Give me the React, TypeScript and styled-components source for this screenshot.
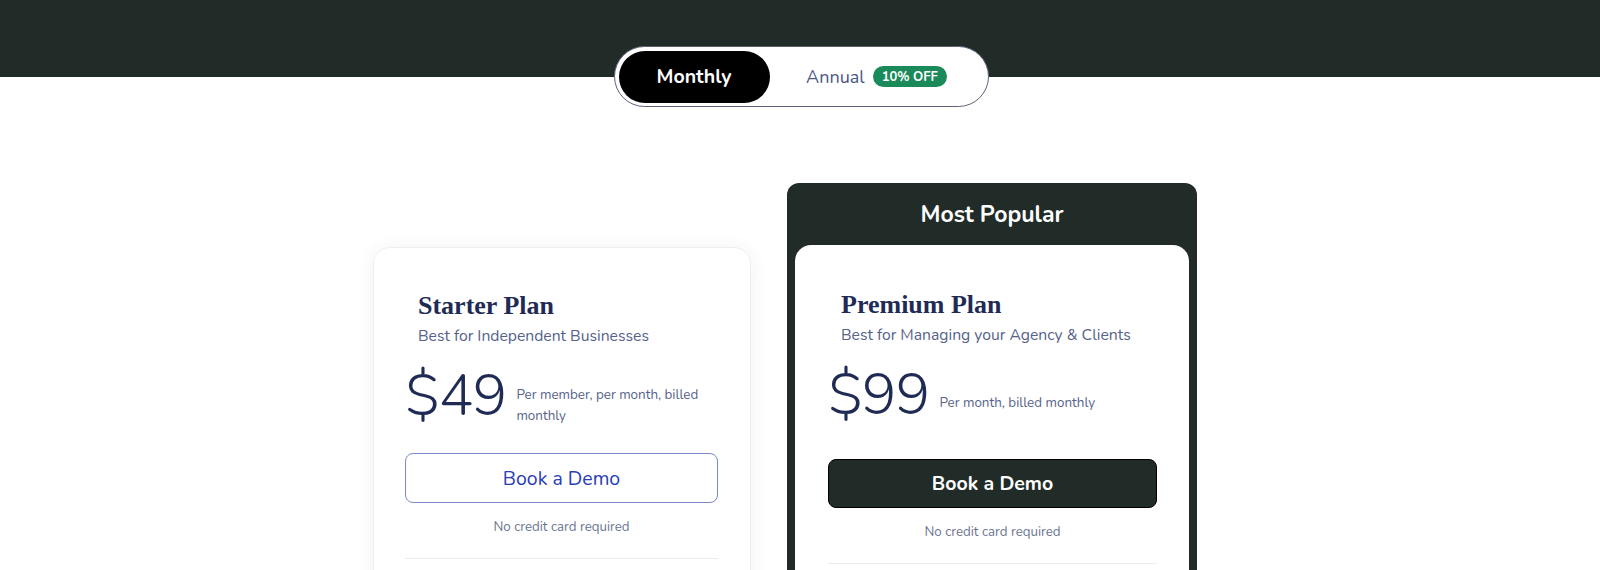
import React, { FC } from 'react';
import styled, { createGlobalStyle } from 'styled-components';

const GlobalStyle = createGlobalStyle`
    html, body {
        margin: 0;
        padding: 0;
        background: #ffffff;
        overflow: hidden;
    }
    body {
        font-family: 'Nunito', 'Lato', 'Noto Sans', sans-serif;
        -webkit-font-smoothing: antialiased;
    }
`;

const dark = '#212c29';
const navy = '#1f2b55';
const muted = '#56628a';

type Plan = {
    name: string;
    tagline: string;
    price: string;
    note: string;
    featured?: boolean;
};

const plans: Plan[] = [
    {
        name: 'Starter Plan',
        tagline: 'Best for Independent Businesses',
        price: '$49',
        note: 'Per member, per month, billed monthly',
    },
    {
        name: 'Premium Plan',
        tagline: 'Best for Managing your Agency & Clients',
        price: '$99',
        note: 'Per month, billed monthly',
        featured: true,
    },
];

const PlanBody: FC<{ plan: Plan }> = ({ plan }) => (
    <>
        <Title>{plan.name}</Title>
        <Tagline>{plan.tagline}</Tagline>
        <PriceRow>
            <Price>{plan.price}</Price>
            <PriceNote $featured={plan.featured}>{plan.note}</PriceNote>
        </PriceRow>
        <DemoButton $featured={plan.featured}>Book a Demo</DemoButton>
        <NoCard>No credit card required</NoCard>
        <Divider />
    </>
);

const App: FC = () => {
    return (
        <Page>
            <GlobalStyle />
            <Hero />
            <ToggleWrap>
                <Toggle>
                    <ToggleOption $active>Monthly</ToggleOption>
                    <ToggleOption>
                        Annual <Badge>10% OFF</Badge>
                    </ToggleOption>
                </Toggle>
            </ToggleWrap>
            <Cards>
                {plans.map((plan) =>
                    plan.featured ? (
                        <Featured key={plan.name}>
                            <FeaturedLabel>Most Popular</FeaturedLabel>
                            <FeaturedInner>
                                <PlanBody plan={plan} />
                            </FeaturedInner>
                        </Featured>
                    ) : (
                        <Card key={plan.name}>
                            <PlanBody plan={plan} />
                        </Card>
                    )
                )}
            </Cards>
        </Page>
    );
};

export default App;

const Page = styled.div`
    min-height: 570px;
`;

const Hero = styled.div`
    height: 77px;
    background: ${dark};
`;

const ToggleWrap = styled.div`
    display: flex;
    justify-content: center;
    margin-top: -31px;
    padding-left: 2px;
`;

const Toggle = styled.div`
    width: 375px;
    height: 61px;
    box-sizing: border-box;
    background: #fff;
    border: 1px solid #5d6178;
    border-radius: 31px;
    padding: 4px;
    display: flex;
    align-items: center;
`;

const ToggleOption = styled.div<{ $active?: boolean }>`
    height: 52px;
    flex: ${(p) => (p.$active ? '0 0 151px' : '1')};
    border-radius: 26px;
    display: flex;
    align-items: center;
    justify-content: center;
    gap: 8px;
    background: ${(p) => (p.$active ? '#000' : 'transparent')};
    color: ${(p) => (p.$active ? '#fff' : '#4a5785')};
    font-size: ${(p) => (p.$active ? '19.5px' : '18px')};
    font-weight: ${(p) => (p.$active ? 700 : 400)};
`;

const Badge = styled.span`
    display: inline-flex;
    align-items: center;
    height: 21px;
    padding: 0 9px;
    border-radius: 11px;
    background: #1b8a5a;
    color: #fff;
    font-size: 13px;
    font-weight: 700;
`;

const Cards = styled.div`
    display: flex;
    justify-content: center;
    align-items: flex-start;
    gap: 36px;
    margin-top: 76px;
    padding-right: 30px;
`;

const Card = styled.div`
    width: 378px;
    box-sizing: border-box;
    margin-top: 64px;
    background: #fff;
    border: 1px solid #eef0f6;
    border-radius: 16px;
    box-shadow: 0 2px 18px rgba(40, 50, 100, 0.07);
    padding: 42px 32px 120px 31px;
`;

const Featured = styled.div`
    width: 410px;
    box-sizing: border-box;
    background: ${dark};
    border-radius: 12px;
    padding: 0 8px;
`;

const FeaturedLabel = styled.div`
    height: 62px;
    display: flex;
    align-items: center;
    justify-content: center;
    color: #fff;
    font-size: 23px;
    font-weight: 700;
`;

const FeaturedInner = styled.div`
    background: #fff;
    border-radius: 16px;
    padding: 44px 32px 120px 33px;
`;

const Title = styled.h2`
    margin: 0 0 0 13px;
    font-family: 'Liberation Serif', 'DejaVu Serif', serif;
    font-size: 26px;
    font-weight: 700;
    color: ${navy};
    line-height: 32px;
`;

const Tagline = styled.p`
    margin: 4px 0 0 13px;
    font-size: 15.7px;
    color: ${muted};
    line-height: 20px;
`;

const PriceRow = styled.div`
    display: flex;
    align-items: center;
    gap: 10px;
    margin-top: 18px;
`;

const Price = styled.span`
    font-size: 58px;
    font-weight: 300;
    color: ${navy};
    line-height: 64px;
    letter-spacing: -1px;
`;

const PriceNote = styled.span<{ $featured?: boolean }>`
    font-size: 13.4px;
    line-height: 21px;
    color: ${muted};
    max-width: 196px;
    margin-top: ${(p) => (p.$featured ? '15px' : '18px')};
`;

const DemoButton = styled.button<{ $featured?: boolean }>`
    display: block;
    width: 100%;
    height: ${(p) => (p.$featured ? '49px' : '50px')};
    margin-top: ${(p) => (p.$featured ? '32px' : '25px')};
    border-radius: 8px;
    font-family: inherit;
    font-size: 19.5px;
    font-weight: ${(p) => (p.$featured ? 700 : 400)};
    cursor: pointer;
    background: ${(p) => (p.$featured ? dark : '#fff')};
    color: ${(p) => (p.$featured ? '#fff' : '#2a3cb5')};
    border: 1px solid ${(p) => (p.$featured ? '#000' : '#7e86cf')};
`;

const NoCard = styled.p`
    margin: 16px 0 0;
    text-align: center;
    font-size: 13.3px;
    color: #6b7592;
    line-height: 16px;
`;

const Divider = styled.hr`
    margin: 23px 0 0;
    border: 0;
    border-top: 1px solid #e8ecf3;
`;
